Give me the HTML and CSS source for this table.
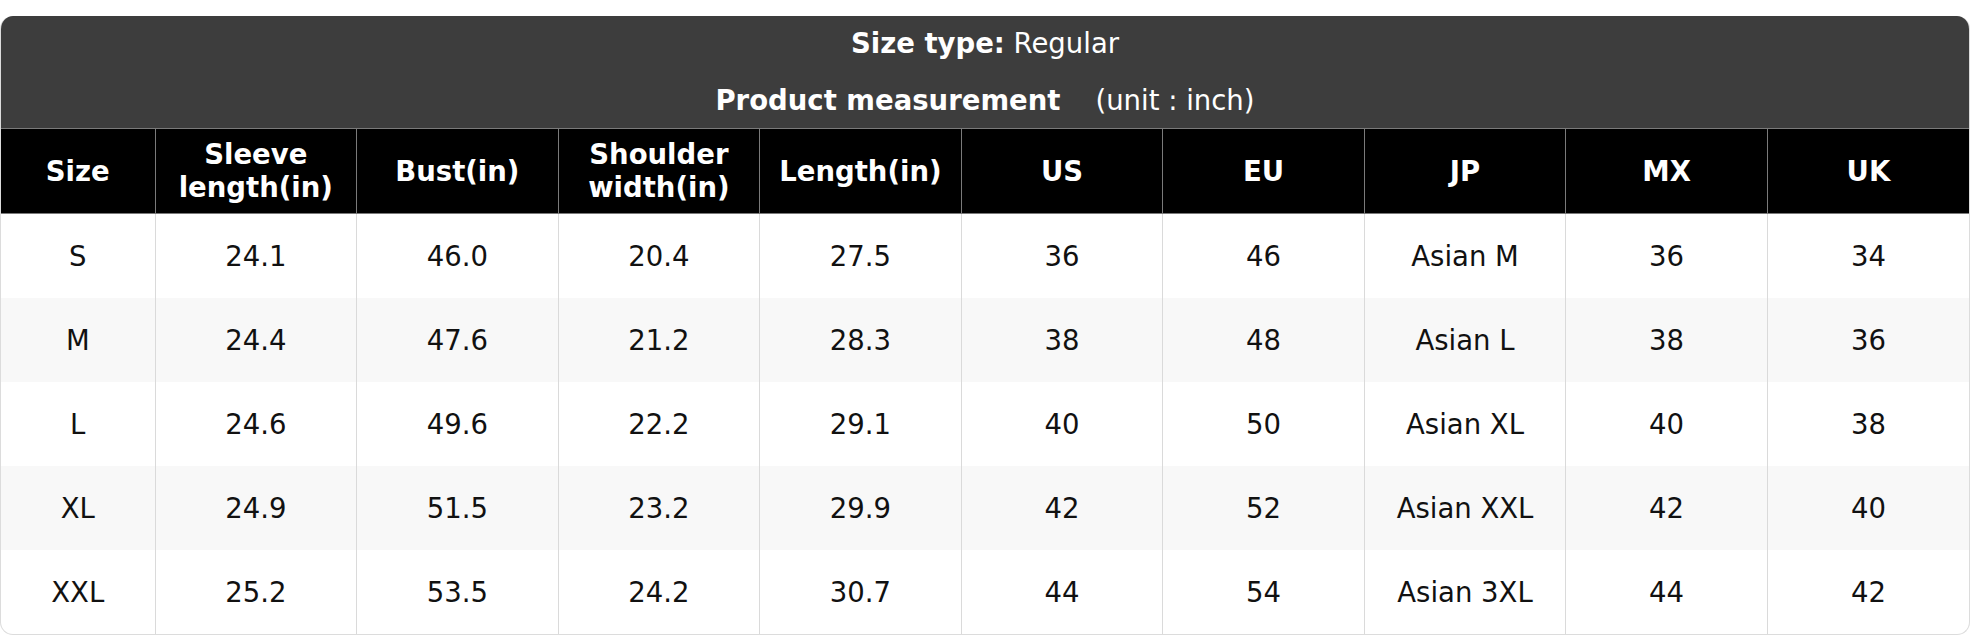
FILE: index.html
```html
<!DOCTYPE html>
<html lang="en">
<head>
<meta charset="utf-8">
<title>Size chart</title>
<link rel="stylesheet" href="styles.css">
</head>
<body>
<div class="page">
  <div class="chart">
    <div class="chart-head">
      <div class="head-line"><strong>Size type:</strong> Regular</div>
      <div class="head-line"><strong>Product measurement</strong><span class="unit">(unit : inch)</span></div>
    </div>
    <table class="sizes">
      <colgroup>
        <col class="col-size">
        <col><col><col><col><col><col><col><col><col>
      </colgroup>
      <thead>
        <tr>
          <th>Size</th>
          <th>Sleeve<br>length(in)</th>
          <th>Bust(in)</th>
          <th>Shoulder<br>width(in)</th>
          <th>Length(in)</th>
          <th>US</th>
          <th>EU</th>
          <th>JP</th>
          <th>MX</th>
          <th>UK</th>
        </tr>
      </thead>
      <tbody>
        <tr><td>S</td><td>24.1</td><td>46.0</td><td>20.4</td><td>27.5</td><td>36</td><td>46</td><td>Asian M</td><td>36</td><td>34</td></tr>
        <tr><td>M</td><td>24.4</td><td>47.6</td><td>21.2</td><td>28.3</td><td>38</td><td>48</td><td>Asian L</td><td>38</td><td>36</td></tr>
        <tr><td>L</td><td>24.6</td><td>49.6</td><td>22.2</td><td>29.1</td><td>40</td><td>50</td><td>Asian XL</td><td>40</td><td>38</td></tr>
        <tr><td>XL</td><td>24.9</td><td>51.5</td><td>23.2</td><td>29.9</td><td>42</td><td>52</td><td>Asian XXL</td><td>42</td><td>40</td></tr>
        <tr><td>XXL</td><td>25.2</td><td>53.5</td><td>24.2</td><td>30.7</td><td>44</td><td>54</td><td>Asian 3XL</td><td>44</td><td>42</td></tr>
      </tbody>
    </table>
  </div>
</div>
</body>
</html>
```

FILE: styles.css
```css
* { box-sizing: border-box; }

html, body {
  margin: 0;
  padding: 0;
  background: #ffffff;
}

body {
  font-family: "DejaVu Sans", "Liberation Sans", sans-serif;
  font-size: 27.5px;
  color: #111111;
}

.page {
  padding-top: 16px;
}

.chart {
  width: 1970px;
  border: 1px solid #dcdcdc;
  border-top: none;
  border-radius: 13px;
  overflow: hidden;
  background: #ffffff;
}

.chart-head {
  background: #3d3d3d;
  color: #ffffff;
  height: 112px;
  padding: 11px 0 11px;
  display: flex;
  flex-direction: column;
  align-items: center;
  gap: 24px;
}

.head-line {
  line-height: 33px;
  white-space: nowrap;
}

.head-line strong {
  font-weight: bold;
}

.unit {
  margin-left: 35px;
}

.sizes {
  width: 100%;
  border-collapse: collapse;
  table-layout: fixed;
}

.col-size {
  width: 154px;
}

.sizes th {
  background: #000000;
  color: #ffffff;
  font-weight: bold;
  line-height: 33px;
  padding: 9px 4px;
  height: 84px;
  border: 1px solid #7a7a7a;
  text-align: center;
  vertical-align: middle;
}

.sizes th:first-child { border-left: none; }
.sizes th:last-child { border-right: none; }

.sizes td {
  text-align: center;
  vertical-align: middle;
  line-height: 34px;
  padding: 25px 4px;
  border-left: 1px solid #dadada;
  border-right: 1px solid #dadada;
  white-space: nowrap;
}

.sizes td:first-child { border-left: none; }
.sizes td:last-child { border-right: none; }

.sizes tbody tr:nth-child(even) td {
  background: #f8f8f8;
}
```
